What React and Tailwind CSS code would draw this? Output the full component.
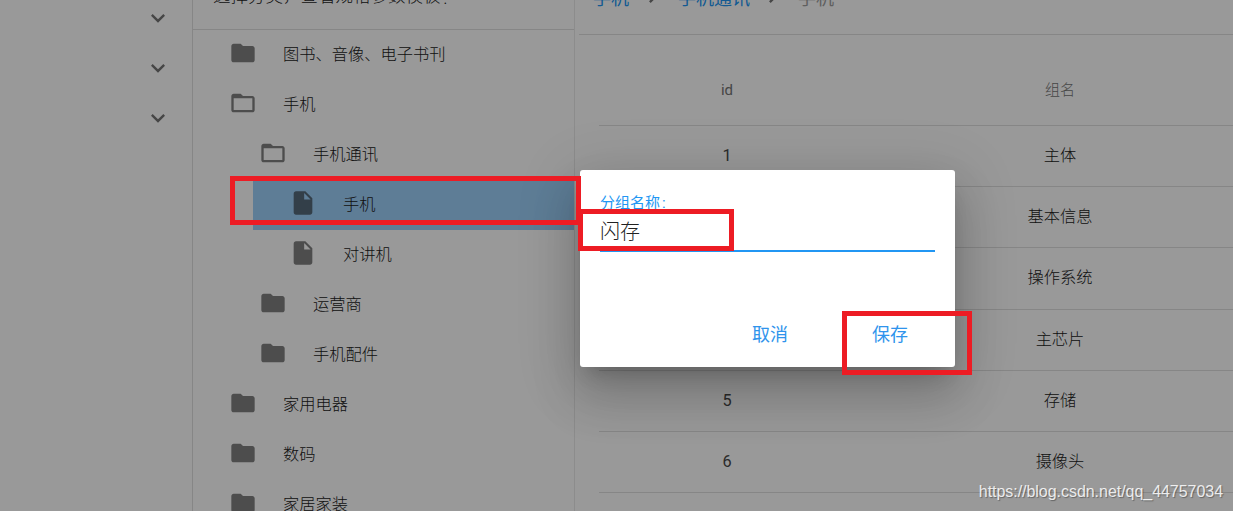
import React, { useState } from 'react';

// --- Ícones ---
const ICON_PATHS = {
  folder: 'M10 4H4c-1.1 0-1.99.9-1.99 2L2 18c0 1.1.9 2 2 2h16c1.1 0 2-.9 2-2V8c0-1.1-.9-2-2-2h-8l-2-2z',
  folderOpen: 'M20 6h-8l-2-2H4c-1.1 0-1.99.9-1.99 2L2 18c0 1.1.9 2 2 2h16c1.1 0 2-.9 2-2V8c0-1.1-.9-2-2-2zm0 12H4V8h16v10z',
  file: 'M14 2H6c-1.1 0-2 .9-2 2v16c0 1.1.89 2 1.99 2H18c1.1 0 2-.9 2-2V8l-6-6zm-1 7V3.5L18.5 9H13z',
  down: 'M16.59 8.59L12 13.17 7.41 8.59 6 10l6 6 6-6z',
  right: 'M10 6L8.59 7.41 13.17 12l-4.58 4.59L10 18l6-6z',
};

const Icon = ({ name, className }) => (
  <svg viewBox="0 0 24 24" fill="currentColor" className={className}>
    <path d={ICON_PATHS[name]} />
  </svg>
);

const categories = [
  { id: 1, level: 0, icon: 'folder', name: '图书、音像、电子书刊' },
  { id: 2, level: 0, icon: 'folderOpen', name: '手机' },
  { id: 3, level: 1, icon: 'folderOpen', name: '手机通讯' },
  { id: 4, level: 2, icon: 'file', name: '手机' },
  { id: 5, level: 2, icon: 'file', name: '对讲机' },
  { id: 6, level: 1, icon: 'folder', name: '运营商' },
  { id: 7, level: 1, icon: 'folder', name: '手机配件' },
  { id: 8, level: 0, icon: 'folder', name: '家用电器' },
  { id: 9, level: 0, icon: 'folder', name: '数码' },
  { id: 10, level: 0, icon: 'folder', name: '家居家装' },
];

const groups = ['主体', '基本信息', '操作系统', '主芯片', '存储', '摄像头'];

const levelMargin = ['ml-0', 'ml-[30px]', 'ml-[60px]'];

const Sidebar = () => (
  <aside className="w-[193px] shrink-0 border-r border-[#e0e0e0] pt-1 pr-5 flex flex-col items-end gap-[22px]">
    {[1, 2, 3].map((n) => (
      <Icon key={n} name="down" className="size-7 text-[#757575]" />
    ))}
  </aside>
);

const CategoryTree = ({ selected, onSelect }) => (
  <section className="w-[382px] shrink-0 overflow-hidden border-r border-[#e9e9e9]">
    <div className="h-[67px] -mt-[37px] pl-5 flex items-center border-b border-[#e0e0e0] text-[17.5px] whitespace-nowrap">
      选择分类，查看规格参数模板<span className="ml-[3px] mt-1">:</span>
    </div>
    <ul>
      {categories.map((c) => (
        <li key={c.id}>
          <div className={levelMargin[c.level]}>
            <div
              onClick={() => onSelect(c.id)}
              className={`h-[50px] flex items-center pl-9 cursor-pointer ${selected === c.id ? 'bg-[#9dd0fb]' : ''}`}
            >
              <Icon
                name={c.icon}
                className={`size-7 mb-1 shrink-0 ${selected === c.id ? 'text-[#56697a]' : 'text-[#808080]'}`}
              />
              <span className="ml-[26px] mt-px text-[16.25px] whitespace-nowrap">{c.name}</span>
            </div>
          </div>
        </li>
      ))}
    </ul>
  </section>
);

const Breadcrumb = () => (
  <nav className="h-[72px] -mt-[37px] ml-1 pl-[14px] flex items-center border-b border-[#e0e0e0] text-[18px] font-normal text-[#2196f3] whitespace-nowrap">
    <span className="w-[36px]">手机</span>
    <Icon name="right" className="size-7 ml-[10px] mr-[11px] mb-[6px] text-[#757575]" />
    <span className="w-[72px]">手机通讯</span>
    <Icon name="right" className="size-7 ml-[9px] mr-[11px] mb-[6px] text-[#757575]" />
    <span className="text-[#9e9e9e]">手机</span>
  </nav>
);

const GroupTable = () => (
  <table className="ml-6 w-[666px] table-fixed border-collapse text-center text-[16.25px]">
    <thead>
      <tr className="h-[90px] border-b border-[#e0e0e0] text-[15px] text-[#757575]">
        <th className="w-[256px] pt-5 font-normal">id</th>
        <th className="w-[410px] pt-5 font-light">组名</th>
      </tr>
    </thead>
    <tbody>
      {groups.map((g, i) => (
        <tr key={g} className={`border-b border-[#e0e0e0] ${i === 2 ? 'h-[62px]' : 'h-[61px]'}`}>
          <td className="pt-px font-normal text-[#484848]">{i + 1}</td>
          <td className="pt-px">{g}</td>
        </tr>
      ))}
    </tbody>
  </table>
);

const GroupDialog = () => {
  const [name, setName] = useState('闪存');

  return (
    <div className="absolute left-[580px] top-[170px] w-[375px] h-[197px] px-5 pt-[23px] flex flex-col rounded-[3px] bg-white shadow-[0_14px_19px_-9px_rgba(0,0,0,0.2),0_30px_48px_4px_rgba(0,0,0,0.14),0_11px_58px_10px_rgba(0,0,0,0.12)]">
      <label className="h-5 text-[15px] leading-5 font-normal text-[#2196f3]">
        分组名称<span className="ml-[2px]">:</span>
      </label>
      <input
        value={name}
        onChange={(e) => setName(e.target.value)}
        className="h-[39px] w-full border-b-2 border-[#2196f3] pb-[3px] text-[20px] outline-none"
      />
      <div className="mt-[60px] flex justify-end gap-[84px] pr-[27px] text-[18px] leading-[45px] font-normal text-[#2f94ec]">
        <button>取消</button>
        <button>保存</button>
      </div>
    </div>
  );
};

export default function App() {
  const [selected, setSelected] = useState(4);

  return (
    <div className="relative w-[1233px] h-[511px] overflow-hidden bg-white text-[#212121] font-light font-['Roboto','Noto_Sans_CJK_SC',sans-serif]">
      <div className="flex h-full">
        <Sidebar />
        <CategoryTree selected={selected} onSelect={setSelected} />
        <main className="flex-1 overflow-hidden">
          <Breadcrumb />
          <GroupTable />
        </main>
      </div>

      <div className="absolute inset-0 bg-black/40" />
      <GroupDialog />

      {/* destaques em vermelho */}
      <div className="absolute left-[230px] top-[176px] w-[351px] h-[49px] border-5 border-[#ed1c24] pointer-events-none" />
      <div className="absolute left-[578px] top-[209px] w-[156px] h-[42px] border-5 border-[#ed1c24] pointer-events-none" />
      <div className="absolute left-[842px] top-[311px] w-[130px] h-[64px] border-5 border-[#ed1c24] pointer-events-none" />

      <div className="absolute right-[10px] bottom-[9px] text-[16px] leading-5 tracking-[-0.04px] font-normal text-white/85 font-['Liberation_Sans',sans-serif] [text-shadow:1px_1px_1px_rgba(0,0,0,0.35)]">
        https://blog.csdn.net/qq_44757034
      </div>
    </div>
  );
}
